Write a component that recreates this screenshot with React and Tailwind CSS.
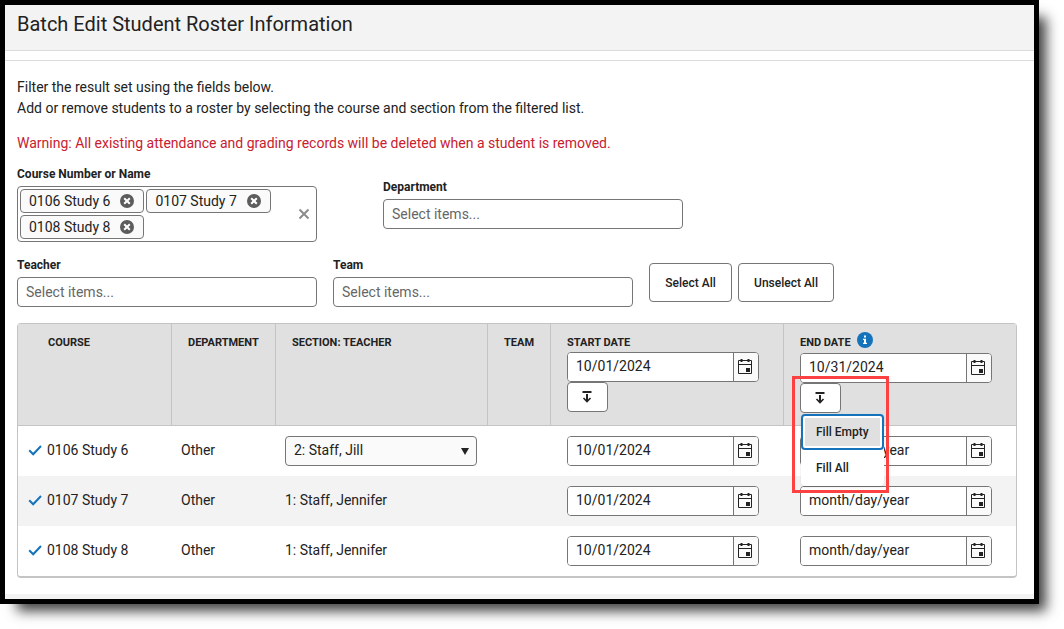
import { Fragment } from 'react';

const rows = [
  { course: '0106 Study 6', department: 'Other', section: '2: Staff, Jill', choose: true },
  { course: '0107 Study 7', department: 'Other', section: '1: Staff, Jennifer' },
  { course: '0108 Study 8', department: 'Other', section: '1: Staff, Jennifer' },
];

function CalendarIcon() {
  return (
    <svg width="16" height="16" viewBox="1 1 16 16" fill="none" stroke="#222" aria-hidden="true">
      <path d="M1.5 2.5h13v13h-13z" />
      <path d="M1 6.5h14" />
      <path d="M4.5 1v3M11.5 1v3" strokeWidth="2" />
      <path d="M9 10h4v4h-4z" fill="#222" stroke="none" />
    </svg>
  );
}

function DateField({ label, value }) {
  return (
    <div className="flex h-[30px] w-[192px] overflow-hidden rounded border border-[#767676] bg-white">
      <input
        type="text"
        aria-label={label}
        defaultValue={value}
        placeholder="month/day/year"
        className="min-w-0 flex-1 bg-white px-2 pb-0.5 text-sm font-normal text-[#222] outline-none placeholder:text-[#222] placeholder:opacity-100"
      />
      <button
        type="button"
        aria-label={`Open calendar for ${label}`}
        className="flex w-[25px] items-center justify-center border-l border-[#767676] bg-[#fafafa]"
      >
        <CalendarIcon />
      </button>
    </div>
  );
}

function FillButton({ label, expanded }) {
  return (
    <button
      type="button"
      aria-label={label}
      aria-haspopup="menu"
      aria-expanded={expanded}
      className="flex h-[30px] w-[41px] items-center justify-center rounded border border-[#767676] bg-white"
    >
      <svg width="12" height="12" viewBox="1 0 12 12" fill="none" stroke="#222" strokeWidth="2" aria-hidden="true">
        <path d="M1.5 1h9" />
        <path d="M6 3v7" />
        <path d="M2.5 7L6 10.5 9.5 7" strokeWidth="1.6" />
      </svg>
    </button>
  );
}

function PickerField({ id, label }) {
  return (
    <div className="w-[300px]">
      <label htmlFor={id} className="block h-[21px] text-xs leading-[19px] font-bold">
        {label}
      </label>
      <input
        id={id}
        type="text"
        placeholder="Select items..."
        className="block h-[30px] w-full rounded border border-[#767676] bg-white px-2 text-sm outline-none placeholder:text-[#666] placeholder:opacity-100"
      />
    </div>
  );
}

function CourseField() {
  return (
    <div className="w-[300px]">
      <label htmlFor="course" className="block h-[21px] text-xs leading-[19px] font-bold">
        Course Number or Name
      </label>
      <div className="flex items-center rounded border border-[#767676] bg-white p-0.5">
        <div className="flex flex-1 flex-wrap gap-0.5">
          {rows.map(({ course }) => (
            <span
              key={course}
              className="flex h-6 items-center gap-2.5 rounded border border-[#767676] bg-[#fafafa] pr-[9px] pl-2 text-sm whitespace-nowrap"
            >
              {course}
              <button type="button" aria-label={`Remove ${course}`}>
                <svg width="14" height="14" viewBox="0 0 14 14" aria-hidden="true">
                  <circle cx="7" cy="7" r="7" fill="#5c5c5c" />
                  <path d="M4.2 4.2l5.6 5.6M9.8 4.2l-5.6 5.6" stroke="#fff" strokeWidth="2" />
                </svg>
              </button>
            </span>
          ))}
          <input id="course" type="text" className="w-4 outline-none" />
        </div>
        <button type="button" aria-label="Clear courses" className="px-1">
          <svg width="12" height="12" viewBox="0 0 12 12" stroke="#8c8c8c" strokeWidth="2" aria-hidden="true">
            <path d="M1.5 1.5l9 9M10.5 1.5l-9 9" />
          </svg>
        </button>
      </div>
    </div>
  );
}

function FillMenu() {
  return (
    <Fragment>
      <div role="menu" className="absolute top-[31px] left-px z-10 w-[83px] rounded bg-white text-xs font-medium shadow-sm">
        <button
          type="button"
          role="menuitem"
          className="block h-9 w-full rounded border-2 border-[#1473ba] bg-white p-0.5 text-left"
        >
          <span className="flex h-full items-center bg-[#e0e0e0] pl-[11px] whitespace-nowrap">Fill Empty</span>
        </button>
        <button type="button" role="menuitem" className="block h-9 w-full pl-[15px] text-left">
          Fill All
        </button>
      </div>
      <div className="pointer-events-none absolute -top-[7px] -left-2 z-20 h-[117px] w-[97px] border-3 border-[#fb4141]" />
    </Fragment>
  );
}

export default function App() {
  const th = 'border-r border-b border-[#c4c4c4] px-4 pt-2 pb-3 text-left align-top text-[11px] leading-[21px] font-bold';
  return (
    <div className="bg-white pr-[25px] pb-[25px] font-[Roboto,sans-serif] text-[#222]">
      <div className="border-5 border-black bg-white shadow-[12px_12px_12px_-5px_rgba(0,0,0,0.75)]">
        <header className="border-b border-[#dcdcdc] bg-[#f3f3f3] px-3 pt-1 pb-[11px]">
          <h1 className="text-xl leading-[30px] font-normal">Batch Edit Student Roster Information</h1>
        </header>
        <main className="mt-[9px] border-t border-[#dcdcdc] px-3 pt-4 pb-4">
          <p className="text-sm leading-[21px]">Filter the result set using the fields below.</p>
          <p className="text-sm leading-[21px]">
            Add or remove students to a roster by selecting the course and section from the filtered list.
          </p>
          <p className="mt-3.5 text-sm leading-[21px] text-[#c8202f]">
            Warning: All existing attendance and grading records will be deleted when a student is removed.
          </p>

          <div className="mt-[11px] flex items-center gap-[66px]">
            <CourseField />
            <PickerField id="department" label="Department" />
          </div>
          <div className="mt-3.5 flex items-center gap-4">
            <PickerField id="teacher" label="Teacher" />
            <PickerField id="team" label="Team" />
            <div className="flex gap-1.5 pt-0.5 text-xs font-medium">
              <button type="button" className="h-[39px] w-[83px] rounded border border-[#767676] bg-white">
                Select All
              </button>
              <button type="button" className="h-[39px] w-24 rounded border border-[#767676] bg-white">
                Unselect All
              </button>
            </div>
          </div>

          <div className="mt-4 mr-[5px] rounded border border-b-2 border-[#c4c4c4]">
            <table className="w-full table-fixed border-separate border-spacing-0">
              <colgroup>
                <col className="w-[154px]" />
                <col className="w-[104px]" />
                <col className="w-[212px]" />
                <col className="w-[63px]" />
                <col className="w-[233px]" />
                <col />
              </colgroup>
              <thead className="bg-[#e0e0e0]">
                <tr>
                  <th scope="col" className={`${th} pl-[30px]`}>COURSE</th>
                  <th scope="col" className={th}>DEPARTMENT</th>
                  <th scope="col" className={th}>SECTION: TEACHER</th>
                  <th scope="col" className={th}>TEAM</th>
                  <th scope="col" className={th}>
                    <div className="h-5">START DATE</div>
                    <DateField label="Start date for all" value="10/01/2024" />
                    <FillButton label="Fill start dates" expanded={false} />
                  </th>
                  <th scope="col" className="border-b border-[#c4c4c4] px-4 pt-2 pb-3 text-left align-top text-[11px] leading-[21px] font-bold">
                    <div className="flex h-[21px] items-start gap-1.5">
                      END DATE
                      <svg width="16" height="16" viewBox="0 0 16 16" role="img" aria-label="Information">
                        <circle cx="8" cy="8" r="8" fill="#1473ba" />
                        <path d="M7 3.5h2v2H7zM6 6.8h3v4h1V12H6v-1.2h1V8H6z" fill="#fff" />
                      </svg>
                    </div>
                    <DateField label="End date for all" value="10/31/2024" />
                    <div className="relative">
                      <FillButton label="Fill end dates" expanded />
                      <FillMenu />
                    </div>
                  </th>
                </tr>
              </thead>
              <tbody className="text-sm">
                {rows.map((row) => (
                  <tr key={row.course} className="h-[50px] even:bg-[#f3f3f3]">
                    <td className="pb-0.5 pl-2.5">
                      <span className="flex items-center gap-[5px]">
                        <svg width="14" height="14" viewBox="0 0 14 14" fill="none" stroke="#1473ba" strokeWidth="2" aria-hidden="true">
                          <path d="M1.2 7.2l4 4L13 3" />
                        </svg>
                        {row.course}
                      </span>
                    </td>
                    <td className="pb-0.5 pl-[9px]">{row.department}</td>
                    <td className={row.choose ? 'pr-[11px] pl-[9px]' : 'pb-0.5 pl-[9px]'}>
                      {row.choose ? (
                        <div className="relative">
                          <select
                            aria-label={`Section for ${row.course}`}
                            className="block h-[30px] w-full appearance-none rounded border border-[#767676] bg-[#fafafa] pr-6 pb-0.5 pl-2"
                          >
                            <option>{row.section}</option>
                          </select>
                          <svg
                            width="8"
                            height="7"
                            viewBox="0 0 8 7"
                            className="pointer-events-none absolute top-3 right-2"
                            aria-hidden="true"
                          >
                            <path d="M0 0h8L4 7z" fill="#222" />
                          </svg>
                        </div>
                      ) : (
                        row.section
                      )}
                    </td>
                    <td />
                    <td className="pl-4">
                      <DateField label={`Start date for ${row.course}`} value="10/01/2024" />
                    </td>
                    <td className="pl-4">
                      <DateField label={`End date for ${row.course}`} value="" />
                    </td>
                  </tr>
                ))}
              </tbody>
            </table>
          </div>
        </main>
        <footer className="h-[5px] bg-[#f3f3f3]" />
      </div>
    </div>
  );
}
